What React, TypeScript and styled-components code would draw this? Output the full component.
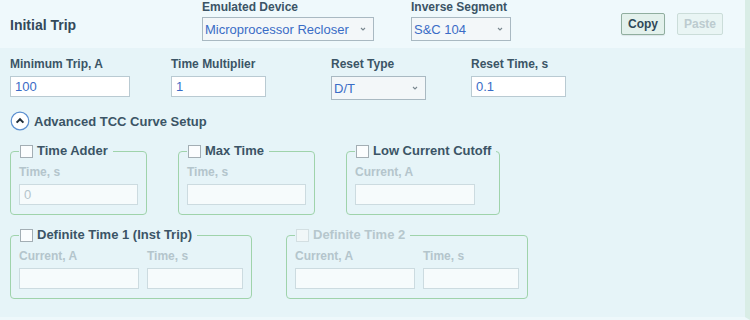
import React from 'react';
import styled, { createGlobalStyle, css } from 'styled-components';

const GlobalStyle = createGlobalStyle`
  html, body {
    margin: 0;
    padding: 0;
    background: #e6f4f8;
    font-family: "Liberation Sans", Arial, sans-serif;
  }
`;

const Panel = styled.div`
  width: 750px;
  height: 320px;
  box-sizing: border-box;
  background: #e6f4f8;
  border-right: 5px solid #d9ede6;
  border-bottom: 3px solid #eef8fb;
  color: #3b5466;
`;

const Header = styled.header`
  height: 48px;
  display: flex;
  align-items: flex-start;
  padding-left: 10px;
  padding-right: 22px;
  background: #eff9fc;
`;

const Title = styled.h1`
  width: 192px;
  margin: 0;
  padding-top: 17px;
  font-size: 14px;
  line-height: 16px;
  font-weight: bold;
  color: #33495a;
`;

const HeaderFields = styled.div`
  display: flex;
  gap: 37px;
`;

const Field = styled.div<{ $w: number }>`
  display: flex;
  flex-direction: column;
  gap: 5px;
  width: ${(p) => p.$w}px;
`;

const HeadField = styled(Field)`
  gap: 3px;
`;

const Label = styled.label<{ $disabled?: boolean }>`
  font-size: 12px;
  line-height: 14px;
  font-weight: bold;
  white-space: nowrap;
  color: ${(p) => (p.$disabled ? '#b4c5cc' : '#3b5466')};
`;

const fieldBox = css`
  box-sizing: border-box;
  font-family: "Liberation Sans", Arial, sans-serif;
  font-size: 13px;
  color: #3a6cc6;
`;

const Input = styled.input`
  ${fieldBox}
  width: 100%;
  height: 21px;
  border: 1px solid #b9cad2;
  background: #ffffff;
  padding: 0 4px;
  outline: none;
  &:disabled {
    background: #f6fbfc;
    border-color: #ccdbe0;
    color: #b4c5cc;
  }
`;

const SelectBox = styled.div<{ $h: number }>`
  ${fieldBox}
  width: 100%;
  height: ${(p) => p.$h}px;
  border: 1px solid #a9b9c2;
  background: #f3f7f9;
  display: flex;
  align-items: center;
  justify-content: space-between;
  padding: 0 6px 0 2px;
`;

const Buttons = styled.div`
  margin-left: auto;
  padding-top: 13px;
  display: flex;
  gap: 12px;
`;

const Button = styled.button`
  height: 22px;
  padding: 0 6px;
  border-radius: 2px;
  font-family: "Liberation Sans", Arial, sans-serif;
  font-size: 12px;
  font-weight: bold;
  color: #2f4858;
  background: #e3f1ec;
  border: 1px solid #90ae9f;
  box-shadow: 0 1px 1px rgba(0, 0, 0, 0.08);
  &:disabled {
    color: #bccbcf;
    background: #e9f5f4;
    border-color: #cbddd9;
    box-shadow: none;
  }
`;

const Body = styled.div`
  padding: 9px 10px 0;
  display: flex;
  flex-direction: column;
`;

const FieldRow = styled.div`
  display: flex;
`;

const Spacer = styled.div<{ $w: number }>`
  width: ${(p) => p.$w}px;
  flex: none;
`;

const Toggle = styled.div`
  margin-top: 11px;
  display: flex;
  align-items: center;
  gap: 4px;
  font-size: 13px;
  font-weight: bold;
  color: #3b5466;
`;

const Groups = styled.div<{ $gap: number; $top: number }>`
  display: flex;
  align-items: flex-start;
  gap: ${(p) => p.$gap}px;
  margin-top: ${(p) => p.$top}px;
`;

const Fieldset = styled.fieldset<{ $w: number }>`
  width: ${(p) => p.$w}px;
  min-width: 0;
  flex: none;
  box-sizing: border-box;
  margin: 0;
  padding: 0 8px 9px;
  border: 1px solid #9fd3ab;
  border-radius: 4px;
  display: flex;
  gap: 8px;
`;

const Legend = styled.legend<{ $disabled?: boolean }>`
  padding: 0 5px 0 0;
  display: flex;
  align-items: center;
  gap: 4px;
  white-space: nowrap;
  font-size: 13px;
  line-height: 16px;
  font-weight: bold;
  color: ${(p) => (p.$disabled ? '#b6c7cd' : '#3b5466')};
`;

const Check = styled.span<{ $disabled?: boolean }>`
  flex: none;
  width: 13px;
  height: 13px;
  box-sizing: border-box;
  border: 1px solid ${(p) => (p.$disabled ? '#d3dfe2' : '#a3aeb4')};
  background: ${(p) => (p.$disabled ? '#f1f7f8' : '#fbfdfe')};
  margin-left: 1px;
`;

const SubField = styled(Field)`
  margin-top: 6px;
`;

const Chevron = () => (
  <svg width="8" height="6" viewBox="0 0 8 6">
    <path d="M2 2 L4 4 L6 2" fill="none" stroke="#7a8890" strokeWidth="1.1" />
  </svg>
);

const CollapseIcon = () => (
  <svg width="20" height="20" viewBox="0 0 20 20">
    <circle cx="10" cy="10" r="8.8" fill="#ffffff" stroke="#5b8fd0" strokeWidth="1.2" />
    <path d="M6.6 11.6 L10 8.2 L13.4 11.6" fill="none" stroke="#1f2d38" strokeWidth="2" />
  </svg>
);

type Sub = { label: string; w: number; value?: string };

const Group = ({
  title,
  width,
  fields,
  disabled,
}: {
  title: string;
  width: number;
  fields: Sub[];
  disabled?: boolean;
}) => (
  <Fieldset $w={width}>
    <Legend $disabled={disabled}>
      <Check $disabled={disabled} />
      {title}
    </Legend>
    {fields.map((f) => (
      <SubField key={f.label} $w={f.w}>
        <Label $disabled>{f.label}</Label>
        <Input disabled defaultValue={f.value} />
      </SubField>
    ))}
  </Fieldset>
);

export default function App() {
  return (
    <>
      <GlobalStyle />
      <Panel>
        <Header>
          <Title>Initial Trip</Title>
          <HeaderFields>
            <HeadField $w={172}>
              <Label>Emulated Device</Label>
              <SelectBox $h={24}>
                Microprocessor Recloser <Chevron />
              </SelectBox>
            </HeadField>
            <HeadField $w={100}>
              <Label>Inverse Segment</Label>
              <SelectBox $h={24}>
                S&amp;C 104 <Chevron />
              </SelectBox>
            </HeadField>
          </HeaderFields>
          <Buttons>
            <Button>Copy</Button>
            <Button disabled>Paste</Button>
          </Buttons>
        </Header>
        <Body>
          <FieldRow>
            <Field $w={120}>
              <Label>Minimum Trip, A</Label>
              <Input defaultValue="100" />
            </Field>
            <Spacer $w={41} />
            <Field $w={95}>
              <Label>Time Multiplier</Label>
              <Input defaultValue="1" />
            </Field>
            <Spacer $w={65} />
            <Field $w={95}>
              <Label>Reset Type</Label>
              <SelectBox $h={24}>
                D/T <Chevron />
              </SelectBox>
            </Field>
            <Spacer $w={45} />
            <Field $w={95}>
              <Label>Reset Time, s</Label>
              <Input defaultValue="0.1" />
            </Field>
          </FieldRow>
          <Toggle>
            <CollapseIcon />
            Advanced TCC Curve Setup
          </Toggle>
          <Groups $gap={31} $top={12}>
            <Group title="Time Adder" width={137} fields={[{ label: 'Time, s', w: 120, value: '0' }]} />
            <Group title="Max Time" width={137} fields={[{ label: 'Time, s', w: 120 }]} />
            <Group title="Low Current Cutoff" width={154} fields={[{ label: 'Current, A', w: 120 }]} />
          </Groups>
          <Groups $gap={34} $top={12}>
            <Group
              title="Definite Time 1 (Inst Trip)"
              width={242}
              fields={[
                { label: 'Current, A', w: 120 },
                { label: 'Time, s', w: 96 },
              ]}
            />
            <Group
              title="Definite Time 2"
              width={242}
              disabled
              fields={[
                { label: 'Current, A', w: 120 },
                { label: 'Time, s', w: 96 },
              ]}
            />
          </Groups>
        </Body>
      </Panel>
    </>
  );
}
